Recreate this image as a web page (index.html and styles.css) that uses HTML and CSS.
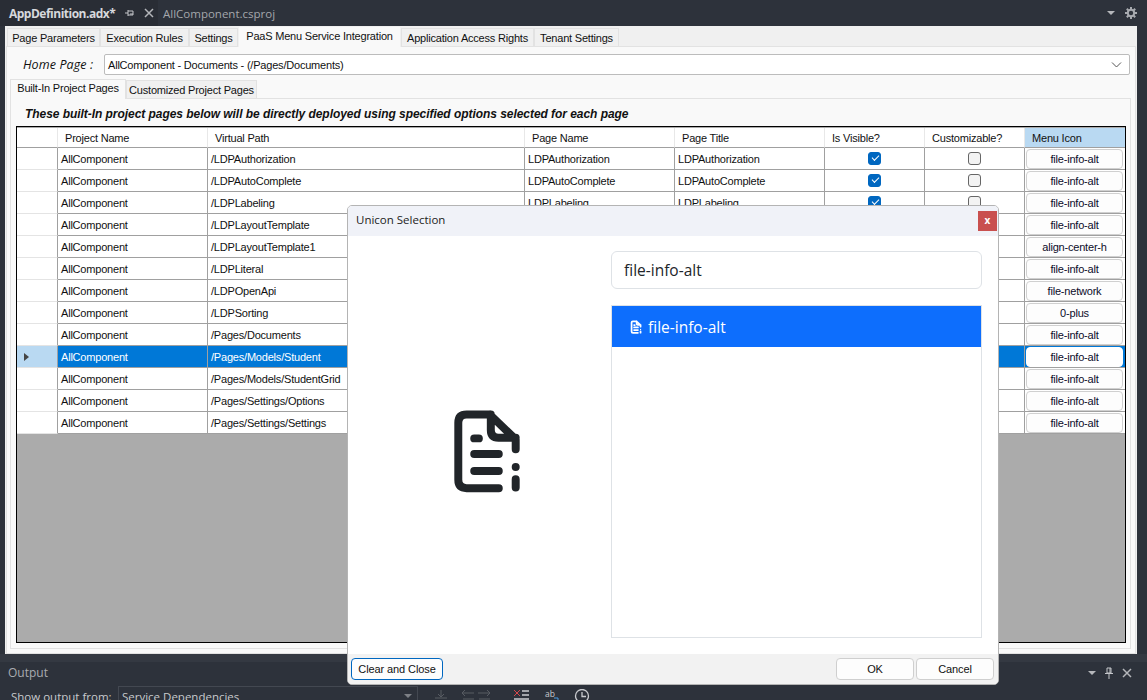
FILE: index.html
```html
<!DOCTYPE html>
<html>
    <head>
        <title>AppDefinition.adx</title>
        <meta charset="UTF-8" />
        <link rel="stylesheet" href="styles.css">
    </head>
    <body>
        <svg class="defs" width="0" height="0">
            <symbol id="file-info" viewBox="60 50 220 270">
                <path class="file-stroke" d="M207 297H110Q85 297 85 272V100Q85 75 110 75H180L258 150V180M183 75V122Q183 145 206 145H258M133 147H147M133 194H207M133 245H207M258 270V295" />
                <circle class="file-dot" cx="258" cy="233" r="12" />
            </symbol>
        </svg>

        <div class="doc-bar">
            <div class="doc-tab">
                <span class="doc-name">AppDefinition.adx*</span>
                <svg class="pin" width="10" height="10" viewBox="0 0 10 10"><path d="M0 5H3M3 2V8M3 3H8V7H3M5 6H8" /></svg>
                <svg class="close" width="10" height="10" viewBox="0 0 10 10"><path d="M1 1L9 9M9 1L1 9" /></svg>
            </div>
            <span class="doc-other">AllComponent.csproj</span>
            <div class="doc-tools">
                <span class="caret"></span>
                <svg class="gear" width="12" height="12" viewBox="0 0 12 12"><circle cx="6" cy="6" r="3.2" /><path d="M6 0V2.5M6 9.5V12M0 6H2.5M9.5 6H12M1.8 1.8L3.5 3.500M8.5 8.500L10.200 10.200M10.200 1.800L8.500 3.500M3.500 8.500L1.800 10.200" /></svg>
            </div>
        </div>

        <div class="editor">
            <div class="tabs main-tabs">
                <span class="tab">Page Parameters</span>
                <span class="tab">Execution Rules</span>
                <span class="tab">Settings</span>
                <span class="tab active">PaaS Menu Service Integration</span>
                <span class="tab">Application Access Rights</span>
                <span class="tab">Tenant Settings</span>
            </div>
            <div class="tab-body">
                <div class="home-row">
                    <span class="home-label">Home Page :</span>
                    <div class="combo">
                        <span>AllComponent - Documents - (/Pages/Documents)</span>
                        <svg width="11" height="6" viewBox="0 0 11 6"><path d="M1 .5L5.500 5L10 .5" /></svg>
                    </div>
                </div>
                <div class="tabs inner-tabs">
                    <span class="tab active">Built-In Project Pages</span>
                    <span class="tab">Customized Project Pages</span>
                </div>
                <div class="inner-body">
                    <p class="notice">These built-In project pages below will be directly deployed using specified options selected for each page</p>
                    <div class="grid">
                        <table>
                            <colgroup>
                                <col class="c-head"><col class="c-project"><col class="c-path"><col class="c-name"><col class="c-name"><col class="c-flag"><col class="c-flag"><col class="c-flag">
                            </colgroup>
                            <thead>
                                <tr>
                                    <th></th><th>Project Name</th><th>Virtual Path</th><th>Page Name</th><th>Page Title</th><th>Is Visible?</th><th>Customizable?</th><th class="sorted">Menu Icon</th>
                                </tr>
                            </thead>
                            <tbody>
                                <tr><th></th><td>AllComponent</td><td>/LDPAuthorization</td><td>LDPAuthorization</td><td>LDPAuthorization</td><td class="mid"><span class="check on"></span></td><td class="mid"><span class="check"></span></td><td class="btn-cell"><span class="cell-btn">file-info-alt</span></td></tr>
                                <tr><th></th><td>AllComponent</td><td>/LDPAutoComplete</td><td>LDPAutoComplete</td><td>LDPAutoComplete</td><td class="mid"><span class="check on"></span></td><td class="mid"><span class="check"></span></td><td class="btn-cell"><span class="cell-btn">file-info-alt</span></td></tr>
                                <tr><th></th><td>AllComponent</td><td>/LDPLabeling</td><td>LDPLabeling</td><td>LDPLabeling</td><td class="mid"><span class="check on"></span></td><td class="mid"><span class="check"></span></td><td class="btn-cell"><span class="cell-btn">file-info-alt</span></td></tr>
                                <tr><th></th><td>AllComponent</td><td>/LDPLayoutTemplate</td><td></td><td></td><td></td><td></td><td class="btn-cell"><span class="cell-btn">file-info-alt</span></td></tr>
                                <tr><th></th><td>AllComponent</td><td>/LDPLayoutTemplate1</td><td></td><td></td><td></td><td></td><td class="btn-cell"><span class="cell-btn">align-center-h</span></td></tr>
                                <tr><th></th><td>AllComponent</td><td>/LDPLiteral</td><td></td><td></td><td></td><td></td><td class="btn-cell"><span class="cell-btn">file-info-alt</span></td></tr>
                                <tr><th></th><td>AllComponent</td><td>/LDPOpenApi</td><td></td><td></td><td></td><td></td><td class="btn-cell"><span class="cell-btn">file-network</span></td></tr>
                                <tr><th></th><td>AllComponent</td><td>/LDPSorting</td><td></td><td></td><td></td><td></td><td class="btn-cell"><span class="cell-btn">0-plus</span></td></tr>
                                <tr><th></th><td>AllComponent</td><td>/Pages/Documents</td><td></td><td></td><td></td><td></td><td class="btn-cell"><span class="cell-btn">file-info-alt</span></td></tr>
                                <tr class="selected"><th><span class="row-arrow"></span></th><td>AllComponent</td><td>/Pages/Models/Student</td><td></td><td></td><td></td><td></td><td class="btn-cell"><span class="cell-btn">file-info-alt</span></td></tr>
                                <tr><th></th><td>AllComponent</td><td>/Pages/Models/StudentGrid</td><td></td><td></td><td></td><td></td><td class="btn-cell"><span class="cell-btn">file-info-alt</span></td></tr>
                                <tr><th></th><td>AllComponent</td><td>/Pages/Settings/Options</td><td></td><td></td><td></td><td></td><td class="btn-cell"><span class="cell-btn">file-info-alt</span></td></tr>
                                <tr><th></th><td>AllComponent</td><td>/Pages/Settings/Settings</td><td></td><td></td><td></td><td></td><td class="btn-cell"><span class="cell-btn">file-info-alt</span></td></tr>
                            </tbody>
                        </table>
                    </div>
                </div>
            </div>
        </div>

        <div class="output">
            <div class="output-title">
                <span>Output</span>
                <div class="doc-tools">
                    <span class="caret"></span>
                    <svg class="pin-v" width="10" height="12" viewBox="0 0 10 12"><path d="M3 1H7V6H3ZM1 6.500H9M5 7V12M6 1V6" /></svg>
                    <svg class="close" width="10" height="10" viewBox="0 0 10 10"><path d="M1 1L9 9M9 1L1 9" /></svg>
                </div>
            </div>
            <div class="output-bar">
                <span class="output-label">Show output from:</span>
                <div class="output-combo">Service Dependencies<span class="caret"></span></div>
                <svg class="tool-icons" width="160" height="14" viewBox="0 0 160 14">
                    <path class="dim" d="M3 9H15M9 1V8M6 5L9 8L12 5M1 12H19M30 4H42M30 4L33 1M30 4L33 7M31 10H42M31 13H42M46 4H58M58 4L55 1M58 4L55 7M47 10H58M47 13H58" />
                    <path class="red" d="M82 1L88 7M88 1L82 7" />
                    <path class="lite" d="M90 2H97M90 6H97M82 10H97M82 13H97" />
                    <text class="ab" x="113" y="8">ab</text>
                    <path class="blue" d="M113 13H126V9H122" />
                    <circle class="lite" cx="150" cy="7" r="6.500" />
                    <path class="lite" d="M150 3V7.500H154" />
                </svg>
            </div>
        </div>

        <div class="dialog">
            <div class="dialog-head">
                <span>Unicon Selection</span>
                <span class="dialog-close">x</span>
            </div>
            <div class="dialog-body">
                <div class="preview">
                    <svg width="73" height="90"><use href="#file-info" /></svg>
                </div>
                <div class="picker">
                    <div class="search">file-info-alt</div>
                    <div class="icon-list">
                        <div class="icon-item">
                            <svg width="12" height="14"><use href="#file-info" /></svg>
                            file-info-alt
                        </div>
                    </div>
                </div>
            </div>
            <div class="dialog-foot">
                <span class="foot-btn primary">Clear and Close</span>
                <div class="foot-right">
                    <span class="foot-btn">OK</span>
                    <span class="foot-btn">Cancel</span>
                </div>
            </div>
        </div>
    </body>
</html>
```

FILE: styles.css
```css
* {
    box-sizing: border-box;
}

body {
    margin: 0;
    height: 700px;
    overflow: hidden;
    position: relative;
    display: flex;
    flex-direction: column;
    background-color: #2d323b;
    font-family: "Liberation Sans", Arial, sans-serif;
    font-size: 11px;
    letter-spacing: -0.2px;
    color: #111;
}

.defs {
    position: absolute;
}

.file-stroke {
    fill: none;
    stroke: currentColor;
    stroke-width: var(--file-weight, 24);
    stroke-linecap: round;
    stroke-linejoin: round;
}

.file-dot {
    fill: currentColor;
}

/* top document tabs */
.doc-bar {
    height: 26px;
    display: flex;
    align-items: center;
    flex-shrink: 0;
    color: #d6d8dc;
}

.doc-tab {
    width: 158px;
    height: 100%;
    padding-left: 9px;
    display: flex;
    align-items: center;
    background-color: #292d35;
}

.doc-name {
    width: 116px;
    font-family: "Open Sans", sans-serif;
    font-size: 12px;
    font-weight: 700;
    letter-spacing: -0.5px;
}

.doc-other {
    margin-left: 5px;
    font-family: "Open Sans", sans-serif;
    font-size: 11.5px;
    letter-spacing: 0;
    color: #a4a7ac;
}

.pin path, .close path, .pin-v path, .gear path {
    fill: none;
    stroke: #c4c6ca;
    stroke-width: 1;
}

.close {
    margin-left: 9px;
}

.close path {
    stroke: #b4b6ba;
    stroke-width: 1.5;
}

.gear circle {
    fill: none;
    stroke: #a8abb0;
    stroke-width: 2;
}

.gear path {
    stroke: #a8abb0;
    stroke-width: 2;
}

.doc-tools {
    margin-left: auto;
    padding-right: 10px;
    display: flex;
    align-items: center;
    gap: 10px;
}

.caret {
    width: 0;
    height: 0;
    border-left: 4px solid transparent;
    border-right: 4px solid transparent;
    border-top: 4px solid #b5b7bb;
}

/* main designer area */
.editor {
    height: 628px;
    flex-shrink: 0;
    margin-left: 5px;
    margin-right: 10px;
    display: flex;
    flex-direction: column;
    background-color: #f0f0f0;
}

.tabs {
    display: flex;
    align-items: flex-end;
    flex-shrink: 0;
}

.main-tabs {
    height: 20px;
    padding-left: 2px;
}

.tab {
    height: 18px;
    line-height: 18px;
    text-align: center;
    white-space: nowrap;
    background-color: #f0f0f0;
    border: 1px solid #e2e2e2;
    border-bottom: 0;
}

.main-tabs .tab:nth-child(1) {
    width: 93px;
}

.main-tabs .tab:nth-child(2) {
    width: 89px;
}

.main-tabs .tab:nth-child(3) {
    width: 49px;
}

.main-tabs .tab:nth-child(4) {
    width: 163px;
}

.main-tabs .tab:nth-child(5) {
    width: 133px;
}

.main-tabs .tab:nth-child(6) {
    width: 85px;
}

.main-tabs .tab.active {
    height: 21px;
    margin-bottom: -1px;
    line-height: 19px;
    background-color: #f9f9f9;
    border-color: #f0f0f0;
    position: relative;
}

.tab-body {
    flex: 1;
    margin: 0 1px;
    padding: 7px 4px 4px 3px;
    display: flex;
    flex-direction: column;
    background-color: #f9f9f9;
    border: 1px solid #e2e2e2;
}

.home-row {
    display: flex;
    align-items: center;
    height: 21px;
    flex-shrink: 0;
}

.home-label {
    width: 94px;
    padding-left: 13px;
    font-family: "Open Sans", sans-serif;
    font-size: 12.5px;
    font-style: italic;
    letter-spacing: 0.1px;
    flex-shrink: 0;
}

.combo {
    flex: 1;
    height: 21px;
    margin-right: 1px;
    padding: 0 7px 0 3px;
    display: flex;
    align-items: center;
    justify-content: space-between;
    background-color: #fff;
    border: 1px solid #bcbcbc;
    border-radius: 2px;
}

.combo path {
    fill: none;
    stroke: #555;
}

.inner-tabs {
    height: 19px;
    margin-top: 4px;
}

.inner-tabs .tab {
    width: 131px;
}

.inner-tabs .tab.active {
    position: relative;
    width: 116px;
    height: 20px;
    margin-bottom: -1px;
    line-height: 17px;
    background-color: #f9f9f9;
}

.inner-body {
    flex: 1;
    padding: 0 4px 5px 5px;
    display: flex;
    flex-direction: column;
    border: 1px solid #e2e2e2;
    background-color: #f9f9f9;
}

.notice {
    margin: 0;
    height: 27px;
    padding: 8px 0 0 9px;
    font-size: 12px;
    line-height: 14px;
    font-weight: 700;
    font-style: italic;
    letter-spacing: -0.05px;
    white-space: nowrap;
    flex-shrink: 0;
}

/* pages grid */
.grid {
    flex: 1;
    background-color: #ababab;
    border: 1px solid #000;
}

.grid table {
    width: 1108px;
    table-layout: fixed;
    border-collapse: separate;
    border-spacing: 0;
    margin-top: 1px;
}

.c-head {
    width: 41px;
}

.c-project {
    width: 150px;
}

.c-path {
    width: 317px;
}

.c-name {
    width: 150px;
}

.c-flag {
    width: 100px;
}

thead th {
    height: 20px;
    padding: 0 0 0 7px;
    text-align: left;
    font-weight: 400;
    background-color: #fff;
    border-right: 1px solid #e8e8e8;
    border-bottom: 1px solid #a0a0a0;
}

thead th.sorted {
    background-color: #b9d9f2;
    border-right: 0;
}

tbody td, tbody th {
    height: 22px;
    padding: 0 0 0 3px;
    background-color: #fff;
    font-weight: 400;
    white-space: nowrap;
    overflow: hidden;
    border-right: 1px solid #a0a0a0;
    border-bottom: 1px solid #a0a0a0;
}

tbody th {
    border-bottom-color: #e4e4e4;
}

tbody td:last-child {
    border-right: 0;
}

.mid {
    text-align: center;
    padding: 0;
}

tbody .btn-cell {
    padding: 0 2px 0 1px;
}

.check {
    display: block;
    width: 13px;
    height: 13px;
    margin: 0 auto;
    background-color: #f3f3f3;
    border: 1px solid #666;
    border-radius: 3px;
    position: relative;
}

.check.on {
    background-color: #0067c0;
    border-color: #0067c0;
}

.check.on::after {
    content: "";
    position: absolute;
    left: 3px;
    top: 2px;
    width: 6px;
    height: 3px;
    border-left: 1px solid #fff;
    border-bottom: 1px solid #fff;
    transform: rotate(-45deg);
}

.cell-btn {
    display: block;
    height: 20px;
    line-height: 18px;
    text-align: center;
    color: #0c0c2a;
    background-color: #fdfdfd;
    border: 1px solid #d0d0d0;
    border-radius: 4px;
}

.selected td, .selected td:last-child {
    background-color: #0078d7;
    color: #fff;
}

.selected th {
    background-color: #b9d9f2;
    text-align: left;
    padding-left: 7px;
}

.selected .cell-btn {
    color: #0c0c2a;
    background-color: #fff;
    border-color: #fff;
}

.row-arrow {
    display: block;
    width: 0;
    height: 0;
    border-top: 4px solid transparent;
    border-bottom: 4px solid transparent;
    border-left: 5px solid #444;
}

/* output panel */
.output {
    flex: 1;
    color: #c8cacd;
    background: linear-gradient(#343942 8px, transparent 8px);
}

.output-title {
    height: 32px;
    padding: 5px 0 0 8px;
    display: flex;
    align-items: center;
    font-family: "Open Sans", sans-serif;
    font-size: 12px;
    letter-spacing: 0;
    color: #a9acb1;
}

.output-title .doc-tools {
    padding-right: 15px;
    gap: 8px;
}

.output-title .close {
    margin-left: 0;
}

.output-bar {
    display: flex;
    align-items: center;
    height: 20px;
    padding-left: 11px;
    font-family: "Open Sans", sans-serif;
    font-size: 11.5px;
    letter-spacing: 0;
}

.output-label {
    width: 107px;
    flex-shrink: 0;
}

.output-combo {
    width: 300px;
    height: 20px;
    padding: 0 5px 0 3px;
    display: flex;
    align-items: center;
    justify-content: space-between;
    background-color: #2d323b;
    border: 1px solid #434851;
}

.output-combo .caret {
    border-top-color: #7d8086;
}

.tool-icons {
    margin-left: 14px;
}

.tool-icons path {
    fill: none;
    stroke-width: 1;
}

.tool-icons .dim {
    stroke: #585c63;
}

.tool-icons .red {
    stroke: #d8474a;
}

.tool-icons .blue {
    stroke: #4a9be0;
}

.tool-icons .lite {
    fill: none;
    stroke: #c9cbcf;
    stroke-width: 1.3;
}

.tool-icons .ab {
    font-size: 8.5px;
    fill: #c9cbcf;
}

/* icon picker dialog */
.dialog {
    position: absolute;
    left: 347px;
    top: 205px;
    width: 652px;
    height: 480px;
    display: flex;
    flex-direction: column;
    background-color: #fff;
    border: 1px solid #b4b4b4;
    border-radius: 5px;
    overflow: hidden;
    font-family: "Open Sans", sans-serif;
    letter-spacing: 0;
}

.dialog-head {
    height: 30px;
    padding: 0 1px 0 8px;
    display: flex;
    align-items: center;
    justify-content: space-between;
    font-size: 11.5px;
    background-color: #f0f2f8;
    color: #222;
    flex-shrink: 0;
}

.dialog-head > span:first-child {
    margin-bottom: 3px;
}

.dialog-close {
    width: 19px;
    height: 20px;
    line-height: 18px;
    text-align: center;
    font-size: 10px;
    font-weight: 700;
    color: #fff;
    background-color: #c9504f;
}

.dialog-body {
    flex: 1;
    display: flex;
}

.preview {
    width: 276px;
    padding-top: 12px;
    display: flex;
    align-items: center;
    justify-content: center;
    color: #212529;
}

.picker {
    flex: 1;
    margin-left: -13px;
    padding: 15px 16px 16px 0;
    display: flex;
    flex-direction: column;
}

.search {
    height: 38px;
    padding-left: 12px;
    line-height: 37px;
    font-size: 15.5px;
    color: #212529;
    border: 1px solid #dee2e6;
    border-radius: 6px;
}

.icon-list {
    flex: 1;
    margin-top: 16px;
    border: 1px solid #dee2e6;
}

.icon-item {
    height: 41px;
    padding-left: 18px;
    display: flex;
    align-items: center;
    gap: 6px;
    font-size: 15.5px;
    color: #fff;
    background-color: #0d6efd;
    --file-weight: 34;
}

.dialog-foot {
    height: 30px;
    padding: 0 4px 0 3px;
    display: flex;
    align-items: center;
    justify-content: space-between;
    background-color: #f2f2f2;
    flex-shrink: 0;
}

.foot-right {
    display: flex;
    gap: 2px;
}

.foot-btn {
    width: 78px;
    height: 22px;
    line-height: 20px;
    text-align: center;
    font-family: "Liberation Sans", Arial, sans-serif;
    font-size: 11px;
    letter-spacing: -0.1px;
    color: #111;
    background-color: #fdfdfd;
    border: 1px solid #cfcfcf;
    border-radius: 4px;
}

.foot-btn.primary {
    width: 92px;
    border-color: #0067c0;
}
```
